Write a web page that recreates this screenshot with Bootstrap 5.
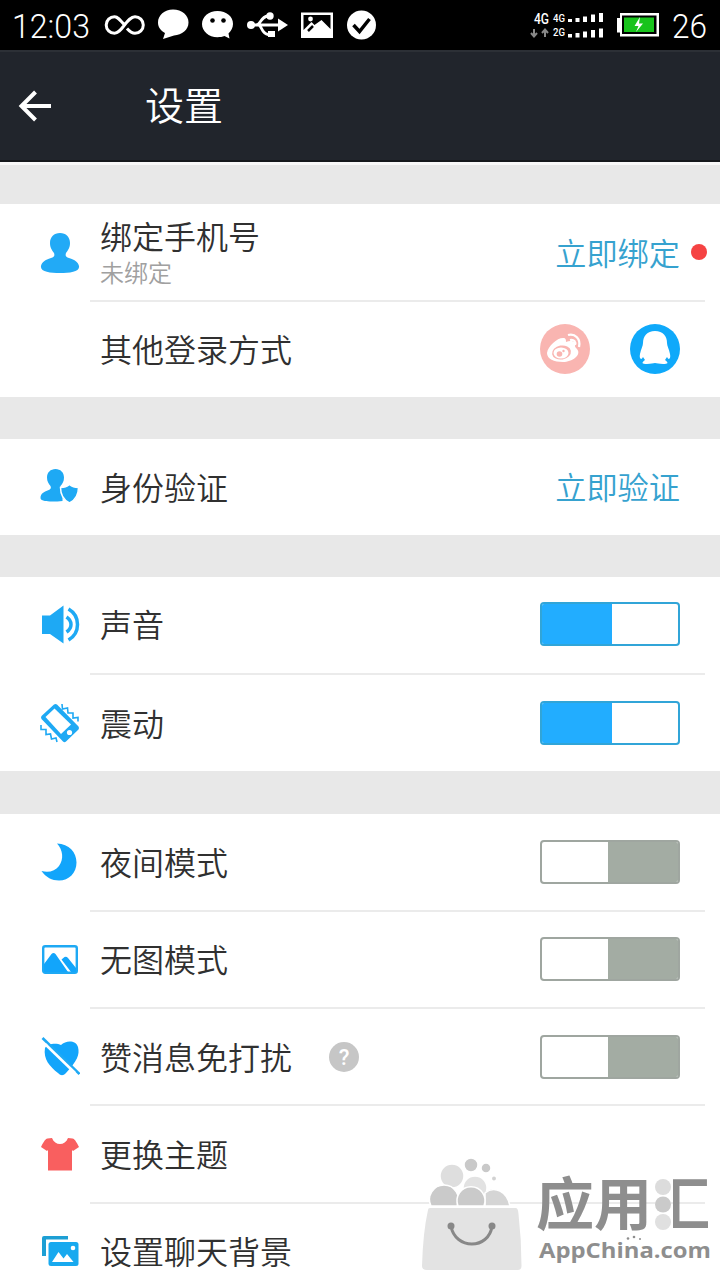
<!DOCTYPE html>
<html lang="zh-CN">
<head>
<meta charset="utf-8">
<meta name="viewport" content="width=device-width, initial-scale=1">
<title>设置</title>
<link href="https://cdn.jsdelivr.net/npm/bootstrap@5.3.0/dist/css/bootstrap.min.css" rel="stylesheet">
<style>
  body { font-family: "Noto Sans CJK SC DemiLight", "Noto Sans CJK SC", sans-serif; font-weight: 350; color: #303030; background: #fff; }
  svg { display: block; flex: none; }
  .screen { width: 720px; height: 1280px; }
  .statusbar { height: 50px; background: #000; font-family: Roboto, sans-serif; font-weight: 300; }
  .topbar { height: 112px; background: #21252c; border-top: 2px solid #2c3036; border-bottom: 2px solid #15181c; padding-left: 18px; }
  .topbar h1 { font-size: 39px; font-weight: 350; line-height: 60px; margin: 0 0 0 93px; padding-bottom: 6px; }
  .gap-band { background: #e8e8e8; }
  .setting { height: 97.4px; padding: 0 40px; position: relative; }
  .setting + .setting::before { content: ""; position: absolute; left: 90px; right: 15px; top: -1px; height: 2px; background: #ebebeb; }
  .setting-label { font-size: 32px; line-height: 44px; margin-left: 20px; padding-bottom: 2px; }
  .setting-note { font-size: 24px; margin-left: 20px; color: #a0a0a0; }
  .act { font-size: 31.2px; line-height: 44px; color: #36a2cf; padding-bottom: 2px; }
  .dot-new { position: absolute; left: 691px; top: 40px; width: 16px; height: 16px; background: #f54343; }
  .toggle { width: 140px; height: 44px; border: 2px solid #31a5d8; border-radius: 4px; overflow: hidden; background: #fff; }
  .toggle i { display: block; width: 70px; height: 100%; background: #22adff; }
  .toggle.off { border-color: #9fa6a0; }
  .toggle.off i { margin-left: auto; background: #a3aca3; }
  .watermark { position: absolute; left: 410px; top: 1150px; }
</style>
</head>
<body>
<div class="screen position-relative overflow-hidden mx-auto">
  <div class="statusbar text-white d-flex align-items-center">
    <svg width="400" height="50" viewBox="0 0 400 50" fill="#fff">
      <text x="12" y="37.500" font-size="33.500" textLength="78" lengthAdjust="spacingAndGlyphs">12:03</text>
      <path d="M124.500 25C119.500 19 117.500 16.700 114.500 16.700a8.300 8.300 0 0 0 0 16.600C118.500 33.300 121 29.500 124.500 25s6.500-8.300 10.500-8.300a8.300 8.300 0 0 1 0 16.600c-3.500 0-6-2.500-8-4.800" fill="none" stroke="#fff" stroke-width="3"/>
      <path d="M173 9.500c9 0 15.500 5.700 15.500 13S182 35 174 35.500L163 39l2-6c-4.500-2.500-7-6-7-10.500 0-7.300 6.500-13 15-13z"/>
      <path d="M217.500 11c9 0 15.500 5.500 15.500 13 0 4-2 7-4.500 9.500l1 5-5-2.500c-2 .8-4.500 1.200-7 1.200-9 0-15.500-6-15.500-13.200S208.500 11 217.500 11z"/>
      <circle cx="212.500" cy="20.500" r="2.300" fill="#000"/><circle cx="223.500" cy="20.500" r="2.300" fill="#000"/>
      <circle cx="251" cy="25" r="4"/><path d="M278 18.500 288 25l-10 6.500z"/>
      <path d="M251 25h30M256 25c5 0 4-8 12-9h2M259 25c3 2 3 9 9 9.500h3" fill="none" stroke="#fff" stroke-width="2.800"/>
      <circle cx="270" cy="16" r="3.700"/><rect x="268" y="31" width="7" height="6"/>
      <path fill-rule="evenodd" d="M301 12.500h32V38h-32zm2.500 2.500v15l8-8 3 3 7-5 9 9V15z"/>
      <circle cx="310.500" cy="19" r="2.400"/><path d="m308 31 5-5" stroke="#000" stroke-width="2.500"/>
      <circle cx="361.500" cy="25" r="14.500"/><path d="m353.500 25 6 6.500 10-12.500" fill="none" stroke="#000" stroke-width="3.500"/>
    </svg>
    <svg class="ms-auto" width="210" height="50" viewBox="510 0 210 50" fill="#fff">
      <g font-weight="500"><text x="534" y="23.500" font-size="14" textLength="15" lengthAdjust="spacingAndGlyphs">4G</text><text x="553" y="22" font-size="10.500" textLength="12" lengthAdjust="spacingAndGlyphs">4G</text><text x="553" y="36" font-size="10.500" textLength="12" lengthAdjust="spacingAndGlyphs">2G</text></g>
      <path d="M534 29v7m-3-3 3 3.500 3-3.500M545 37v-7m-3 3 3-3.500 3 3.500" fill="none" stroke="#888" stroke-width="2"/>
      <path d="M568 19h4v3h-4zM575.500 18h4v4h-4zM583 16.500h4V22h-4zM591 14.500h4V22h-4zM599 13h4v9h-4zM568 34h4v3.500h-4zM575.500 33h4v4.500h-4zM583 31.500h4v6h-4zM591 30h4v7.500h-4zM599 28.500h4v9h-4z"/>
      <path d="M620 13h39v23.500h-39v-4h-3V18h3z"/><path d="M622 15.500h34.500V34H622z" fill="#000"/><path d="M624 17.500h30v14.500h-30z" fill="#18c31c"/>
      <path d="m640 17-5.500 9h4l-2.500 6 7-8.500h-4z"/>
      <text x="672" y="37.500" font-size="33.500" textLength="35" lengthAdjust="spacingAndGlyphs">26</text>
    </svg>
  </div>

  <header class="topbar text-white d-flex align-items-center">
    <svg width="34" height="34" viewBox="0 0 34 34" fill="none" stroke="#fff" stroke-width="4"><path d="M3 17h30M17.500 3 3.500 17l14 14"/></svg>
    <h1>设置</h1>
  </header>

  <div class="gap-band" style="height:42px;border-top:3px solid #f8f8f8"></div>
  <section>
    <div class="setting d-flex align-items-center" style="height:97px">
      <svg width="40" height="40" viewBox="0 0 40 40" fill="#22aaf6"><path d="M20 0c6 0 10 4 10 10 0 5-2 7-4 10-1 3 0 4 3 5 6 2 9 4 10 8 1 6-9 7-19 7S0 39 1 33c1-4 4-6 10-8 3-1 4-2 3-5-2-3-4-5-4-10C10 4 14 0 20 0z"/></svg>
      <div><div class="setting-label pb-0" style="line-height:38px">绑定手机号</div><div class="setting-note" style="line-height:36px">未绑定</div></div>
      <span class="act ms-auto">立即绑定</span><span class="dot-new rounded-circle"></span>
    </div>
    <div class="setting d-flex align-items-center" style="height:96px">
      <span class="setting-label" style="margin-left:60px">其他登录方式</span>
      <div class="d-flex ms-auto" style="gap:40px">
        <svg width="50" height="50" viewBox="0 0 50 50"><circle cx="25" cy="25" r="25" fill="#f9b5b1"/><path d="M7 29c1-7 10-15 16-15 3 0 3 2 3 4 5-2 10-1 9 4 0 1 1 2 2 3 5 6-5 13-14 13-9 0-16-3-16-9z" fill="#fff"/><ellipse cx="21.500" cy="28.500" rx="9.500" ry="7" transform="rotate(-10 21.500 28.500)" fill="#f9b5b1"/><ellipse cx="21" cy="29" rx="7.500" ry="5.500" fill="#fff"/><circle cx="19.500" cy="30" r="2.800" fill="#f9b5b1"/><circle cx="23.500" cy="27" r="1.200" fill="#f9b5b1"/><path d="M28 11c7-2 13 4 11 12M30 16c4-1 6 2 5 5" fill="none" stroke="#fff" stroke-width="2.300"/></svg>
        <svg width="50" height="50" viewBox="0 0 50 50"><circle cx="25" cy="25" r="25" fill="#0fa9fa"/><path d="M25 7c8 0 12 5 12 12 0 3 2 6 3 11 1 4-1 7-3 3l-2 3c4 3 3 4-2 4-4 0-6-1-8-1s-4 1-8 1c-5 0-6-1-2-4l-2-3c-2 4-4 1-3-3 1-5 3-8 3-11 0-7 4-12 12-12z" fill="#fff"/></svg>
      </div>
    </div>
  </section>

  <div class="gap-band" style="height:42px"></div>
  <section>
    <div class="setting d-flex align-items-center" style="height:96px">
      <svg width="40" height="40" viewBox="0 0 40 40" fill="#1ea9f4"><path d="M15.500 2c5 0 8.500 3.500 8.500 8.500 0 4-1.500 6-3.500 8.500-1 2.500 0 4 2 5v10c-10 1-22 1-22-3 0-5 4-6 7-7.500 3-1 4-2 3-4.500C8.500 16.500 7 14.500 7 10.500 7 5.500 10.500 2 15.500 2z"/><path d="M29.500 17.500c3 2.500 6 3 9 3 0 7-2 12-9 15.500-7-3.500-9-8.500-9-15.500 3 0 6-.5 9-3z" stroke="#fff" stroke-width="1.500"/></svg>
      <span class="setting-label">身份验证</span><span class="act ms-auto">立即验证</span>
    </div>
  </section>

  <div class="gap-band" style="height:42px"></div>
  <section>
    <div class="setting d-flex align-items-center pb-1" style="height:97px">
      <svg width="40" height="40" viewBox="0 0 40 40" fill="#1ea9f4"><path d="M2 11.500h8L23.500 1.500v38L10 30H2z"/><path d="M26.500 13c6 4 6 11 0 15M28.500 5c12 7 12 24 0 31" fill="none" stroke="#1ea9f4" stroke-width="3.500"/></svg>
      <span class="setting-label">声音</span><div class="toggle ms-auto"><i></i></div>
    </div>
    <div class="setting d-flex align-items-center">
      <svg width="40" height="40" viewBox="0 0 40 40"><path d="M14 1.500 1.500 13q-1 1.500 0 3L23 38.500q1.500 1.500 3 0l12.500-12q1-1.500 0-3L17 1.500q-1.500-1-3 0z" fill="#1ea9f4"/><path d="M14.500 5.500 5.500 14 21 31 31 21.500z" fill="#fff"/><circle cx="29.500" cy="29.500" r="2.600" fill="#fff"/><path d="M22 1l.5 5 5-1 .5 5 5 0v5l5-.5v4M1 22v4.500h5v5l4.500-.5 1 5 4.500-1 1 4" fill="none" stroke="#1ea9f4" stroke-width="1.600"/></svg>
      <span class="setting-label">震动</span><div class="toggle ms-auto"><i></i></div>
    </div>
  </section>

  <div class="gap-band" style="height:42.600px"></div>
  <section>
    <div class="setting d-flex align-items-center" style="height:96.600px">
      <svg width="40" height="40" viewBox="0 0 40 40" fill="#12a5fb"><path d="M17 1.500C29 2 36.500 10 36.500 20.500 36.500 31 29 38.500 19 38.500c-7 0-13-3-17.500-9.500C9 31 15 29 19 24 24 17 23 8 17 1.500z"/></svg>
      <span class="setting-label">夜间模式</span><div class="toggle off ms-auto"><i></i></div>
    </div>
    <div class="setting d-flex align-items-center">
      <svg width="40" height="40" viewBox="0 0 40 40"><rect x="3.200" y="7.200" width="33.600" height="26.600" rx="2" fill="none" stroke="#1ea9f4" stroke-width="2.400"/><path d="M4 25 11.500 15q2-2 4 0L28 33H4zM21.500 20.500l3-2.500q2-1 3.500 1L36 29v4h-5z" fill="#12a5fb"/></svg>
      <span class="setting-label">无图模式</span><div class="toggle off ms-auto"><i></i></div>
    </div>
    <div class="setting d-flex align-items-center">
      <svg width="40" height="40" viewBox="0 0 40 40"><path d="M21 8c5-5 15-5 17 2 2 8-1 14-12 26-3 3-5 3-8 0C10 30 3 22 5 11c3-5 12-5 16-3z" fill="#12a5fb"/><path d="m2.500 1 37 36" stroke="#1ea9f4" stroke-width="2.600"/><path d="m5 7 30 29" stroke="#fff" stroke-width="2.600"/></svg>
      <span class="setting-label">赞消息免打扰</span>
      <svg style="margin-left:37px" width="30" height="30" viewBox="0 0 30 30"><circle cx="15" cy="15" r="15" fill="#c6c6c6"/><text x="15" y="22.500" font-size="22" font-family="Roboto" font-weight="500" text-anchor="middle" fill="#fff">?</text></svg>
      <div class="toggle off ms-auto"><i></i></div>
    </div>
    <div class="setting d-flex align-items-center">
      <svg width="40" height="40" viewBox="0 0 40 40" fill="#f95f5f"><path d="M12 4c3 8 13 8 16 0l4.500.5C35 5 37 9 39 13l-6 4-1-1v20.500H8V16l-1 1-6-4C3 9 5 5 7.500 4.500z"/></svg>
      <span class="setting-label">更换主题</span>
    </div>
    <div class="setting d-flex align-items-center">
      <svg width="40" height="40" viewBox="0 0 40 40"><path d="M2 25V7q0-2 2-2h24v3.500H6V25z" fill="#1d9fd4"/><rect x="8.500" y="11" width="30" height="24" rx="2.500" fill="#18a9ef"/><path d="m12 31 6.500-10 5 6.500 3.500-4.500 6.500 8z" fill="#fff"/><circle cx="33" cy="17" r="2.300" fill="#fff"/></svg>
      <span class="setting-label">设置聊天背景</span>
    </div>
  </section>

  <svg class="watermark" width="310" height="130" viewBox="0 0 310 130">
    <defs><clipPath id="boxside"><rect x="263" y="20" width="50" height="70"/></clipPath></defs>
    <g stroke="#fff" stroke-width="1.500">
      <circle cx="42" cy="26" r="12" fill="#dedede"/><circle cx="65" cy="38" r="12" fill="#e2e2e2"/>
      <circle cx="61" cy="15" r="7" fill="#c9c9c9"/><circle cx="76" cy="18" r="5" fill="#c9c9c9"/><circle cx="84" cy="28.500" r="2.700" fill="#d2d2d2"/>
      <path d="M21 56a14.500 14.500 0 1 1 26 0z" fill="#cacaca"/><path d="M75 56v-13a13.500 13.500 0 0 1 15-2q8 4 10 15z" fill="#d5d5d5"/><path d="M48 56a14 14 0 1 1 26 0z" fill="#cacaca"/>
    </g>
    <path d="M20 58h86q2 0 2.500 6 3 26 3 52 0 4-4 4H17q-5 0-5-4 1-34 6-56 0-2 2-2z" fill="#e3e3e3"/>
    <path d="M41 76c4 24 38 24 41 0" fill="none" stroke="#888" stroke-width="3"/><circle cx="41" cy="76" r="3.500" fill="#888"/><circle cx="82" cy="76" r="3.500" fill="#888"/>
    <g font-family="'Noto Sans CJK SC', sans-serif" font-weight="700" font-size="57" fill="#8e8e8e">
      <text x="126" y="75" textLength="116" lengthAdjust="spacingAndGlyphs">应用</text>
      <text x="243" y="75" clip-path="url(#boxside)">汇</text>
    </g>
    <g><circle cx="253" cy="37" r="8" fill="#dcdcdc"/><circle cx="253" cy="54.500" r="8" fill="#cacaca"/><circle cx="253" cy="72" r="8" fill="#e0e0e0"/></g>
    <text x="129" y="107.500" font-family="'Open Sans', sans-serif" font-weight="700" font-size="21" fill="#8e8e8e" textLength="172" lengthAdjust="spacingAndGlyphs">AppChina.com</text>
    <g fill="#8e8e8e"><circle cx="218" cy="88.500" r="1.300"/><circle cx="224" cy="87" r="1.300"/><circle cx="230" cy="89" r="1"/></g>
  </svg>
</div>
<script src="https://cdn.jsdelivr.net/npm/bootstrap@5.3.0/dist/js/bootstrap.bundle.min.js"></script>
</body>
</html>
